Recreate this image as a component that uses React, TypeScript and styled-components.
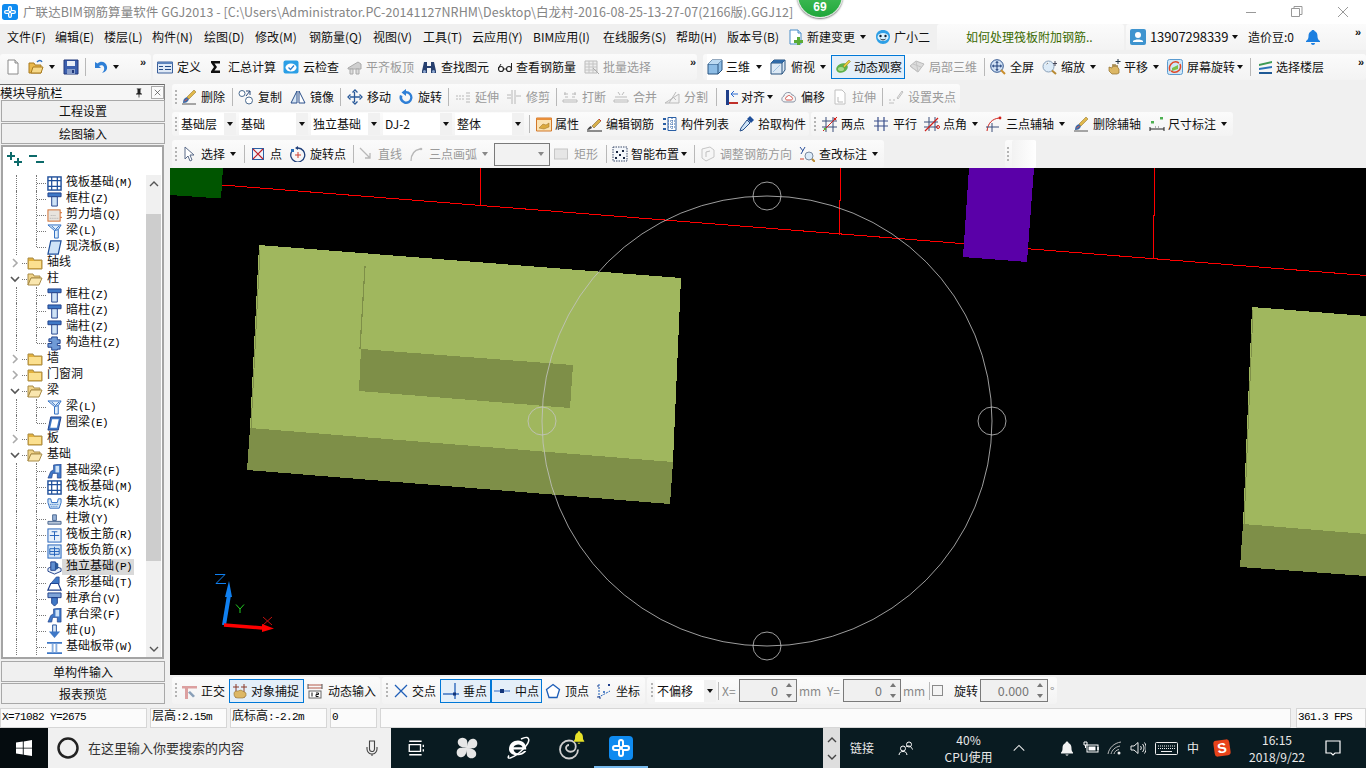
import React from "react";
import styled, { createGlobalStyle } from "styled-components";

const UI = '"Noto Sans CJK SC", "Noto Sans", sans-serif';
const MONO = '"Liberation Mono", "Noto Sans CJK SC", monospace';

const Global = createGlobalStyle`
  html, body { margin: 0; padding: 0; background: #f0f0f0; overflow: hidden; }
  * { box-sizing: border-box; }
`;

const Page = styled.div`
  width: 1366px; height: 768px; display: flex; flex-direction: column; overflow: hidden; position: relative;
  font: 12px/16px ${UI}; color: #111; background: #f0f0f0;
`;
const IconSvg = styled.svg`display: block; flex: none;`;

/* title */
const TitleBar = styled.div`height: 24px; background: #fff; display: flex; align-items: center; position: relative; flex: none;`;
const AppLogo = styled.span`display: flex; margin: 0 5px 0 2px;`;
const TitleText = styled.span`font-size: 12.5px; color: #858585; white-space: nowrap; letter-spacing: 0.07px;`;
const WinControls = styled.div`margin-left: auto; display: flex; height: 20px; align-items: center;`;
const WinButton = styled.span`width: 46px; display: flex; justify-content: center;`;
const Badge = styled.div`
  position: absolute; left: 797px; top: -28px; width: 46px; height: 46px; border-radius: 50%;
  background: linear-gradient(#5fd070, #1fa63a); box-shadow: 0 1px 2px #777; border: 1px solid #e8e8e8;
  color: #fff; font: bold 12px/14px "Liberation Sans", sans-serif; text-align: center; padding-top: 27px;
`;

/* menu */
const MenuBar = styled.div`height: 30px; display: flex; align-items: flex-start; flex: none; padding-left: 7px;`;
const MenuCells = styled.div`display: flex; height: 26px; align-items: center;`;
const MenuItem = styled.span<{ $w: number }>`width: ${(p) => p.$w}px; white-space: nowrap; flex: none;`;
const NewsTab = styled.div`
  width: 187px; height: 26px; flex: none; padding-left: 29px; display: flex; align-items: center; color: #3a6a00;
  border-radius: 3px 3px 0 0; background: linear-gradient(#fbfbfb, #f3f3f3);
`;
const UserTab = styled.div`
  margin-left: 2px; flex: 1; height: 26px; display: flex; align-items: center; padding: 0 3px 0 4px;
  background: linear-gradient(#fbfbfb, #f3f3f3); border-radius: 3px 0 0 0;
`;
const Phone = styled.span`font-size: 13px; margin-left: 4px; width: 77px; white-space: nowrap; letter-spacing: -0.1px;`;
const Beans = styled.span`margin-left: 10px; width: 46px; white-space: nowrap;`;
const BellSlot = styled.span`margin-left: 11px; display: flex;`;
const More = styled.span`margin-left: auto; font: bold 11px/10px "Liberation Sans", sans-serif; align-self: flex-start; margin-top: 3px; padding-right: 2px;`;

/* toolbars */
const ToolRow = styled.div<{ $h: number; $mb?: number; $ml?: number; $mt?: number }>`
  height: ${(p) => p.$h}px; margin: ${(p) => p.$mt ?? 0}px 0 ${(p) => p.$mb ?? 0}px ${(p) => p.$ml ?? 0}px;
  display: flex; flex: none; align-items: stretch;
`;
const Bar = styled.div<{ $ml?: number; $fill?: boolean; $p?: number; $w?: number }>`
  display: flex; align-items: center; height: 100%; flex: ${(p) => (p.$fill ? "1" : "none")};
  margin-left: ${(p) => p.$ml ?? 0}px; padding-left: ${(p) => p.$p ?? 0}px;
  ${(p) => (p.$w ? `width: ${p.$w}px;` : "")}
  background: linear-gradient(#fbfbfb, #f3f3f3); border-radius: 3px; white-space: nowrap;
`;
const GripBox = styled.span<{ $w: number; $x: number }>`
  flex: none; width: ${(p) => p.$w}px; height: 100%; display: flex; align-items: center; padding-left: ${(p) => p.$x}px;
  &::before { content: ""; width: 2px; height: 15px; background: repeating-linear-gradient(to bottom, #b4b4b4 0 2px, transparent 2px 4px); }
`;
const ToolBox = styled.div<{ $w?: number; $p?: number; $on?: boolean; $hl?: boolean }>`
  flex: none; ${(p) => (p.$w ? `width: ${p.$w}px;` : "")} padding-left: ${(p) => p.$p ?? 0}px;
  display: flex; align-items: center;
  ${(p) => (p.$on ? "height: 24px; border: 1px solid #0078d7; background: #e4eff9;" : "")}
  ${(p) => (p.$hl ? "background: #fff; height: 100%;" : "")}
`;
const IconSlot = styled.span`width: 16px; height: 16px; display: flex; flex: none;`;
const Label = styled.span<{ $g: number; $off?: boolean }>`
  margin-left: ${(p) => p.$g}px; white-space: nowrap; color: ${(p) => (p.$off ? "#9a9a9a" : "#111")};
`;
const Caret = styled.i<{ $m: number; $off?: boolean }>`
  margin-left: ${(p) => p.$m}px; flex: none; width: 0; height: 0; border: 3.5px solid transparent; border-bottom: 0;
  border-top: 4px solid ${(p) => (p.$off ? "#888" : "#111")};
`;
const SepBox = styled.span<{ $w: number }>`
  flex: none; width: ${(p) => p.$w}px; height: 100%; display: flex; align-items: center;
  &::before { content: ""; width: 1px; height: 18px; background: #b8b8b8; }
`;
const Chevrons = styled.span`font: bold 11px/10px "Liberation Sans", sans-serif; align-self: flex-start; margin-top: 3px; color: #222;`;
const ComboBox = styled.div<{ $w: number; $mr?: number }>`
  flex: none; width: ${(p) => p.$w}px; height: 22px; margin-right: ${(p) => p.$mr ?? 0}px; display: flex; background: #fff; align-items: center; padding-left: 2px;
`;
const ComboText = styled.span`flex: 1; white-space: nowrap;`;
const ComboBtn = styled.span`width: 12px; height: 22px; background: #f1f1f1; display: flex; align-items: center; justify-content: center;`;
const EmptyCombo = styled.div`
  flex: none; width: 56px; height: 23px; border: 1px solid #7a7a7a; background: #f2f2f2; display: flex; align-items: center; justify-content: flex-end; padding-right: 5px; margin-right: 3px;
`;
const FadePanel = styled.div`flex: 1; height: 100%; margin-left: 3px; background: linear-gradient(90deg, #f2f2f2, #fff); border-radius: 2px;`;
const FieldLabel = styled.span<{ $w: number; $off?: boolean }>`
  flex: none; width: ${(p) => p.$w}px; padding-left: 2px; white-space: nowrap; color: ${(p) => (p.$off ? "#888" : "#111")};
`;
const SpinInput = styled.div<{ $w: number }>`
  flex: none; width: ${(p) => p.$w}px; height: 23px; border: 1px solid #7a7a7a; background: #f0f0f0; display: flex; align-items: center; color: #777;
`;
const SpinValue = styled.span`flex: 1; text-align: right; padding-right: 3px; font-size: 12.5px;`;
const SpinArrows = styled.span`width: 15px; display: flex; flex-direction: column; align-items: center; gap: 7px;`;
const Tri = styled.i<{ $up?: boolean }>`
  width: 0; height: 0; border: 3px solid transparent;
  ${(p) => (p.$up ? "border-top: 0; border-bottom: 4px solid #777;" : "border-bottom: 0; border-top: 4px solid #777;")}
`;
const Check = styled.span`flex: none; width: 11px; height: 11px; border: 1px solid #8a8a8a; margin-right: 9px; background: #f4f4f4;`;

/* body */
const Body = styled.div`height: 622px; display: flex; flex: none;`;
const Nav = styled.div`width: 165px; flex: none; display: flex; flex-direction: column; padding-bottom: 2px;`;
const NavHead = styled.div`
  height: 16px; flex: none; border-top: 1px solid #6a6a6a; background: #f6f6f6; border-right: 1px solid #888; display: flex; align-items: center; font-size: 12.5px; line-height: 14px; white-space: nowrap;
`;
const NavClose = styled.span`width: 17px; height: 13px; border: 1px solid #aaa; background: #fafafa; margin-left: 6px; display: flex; align-items: center; justify-content: center;`;
const NavPin = styled.span`margin-left: 70px; display: flex;`;
const NavButton = styled.div<{ $mt?: number; $h?: number }>`
  height: ${(p) => p.$h ?? 21}px; flex: none; border: 1px solid #a8a8a8; margin: ${(p) => p.$mt ?? 0}px 0 0 1px; text-align: center; line-height: 20px; background: #f0f0f0;
`;
const TreePane = styled.div`flex: 1; min-height: 0; border: 2px solid #a4a4a4; margin: 1px 1px 2px 1px; background: #fff; display: flex; flex-direction: column;`;
const TreeTools = styled.div`height: 28px; flex: none; display: flex; align-items: center; padding: 0 0 4px 4px; gap: 6px;`;
const TreeWrap = styled.div`flex: 1; min-height: 0; display: flex; overflow: hidden;`;
const TreeList = styled.div`flex: 1; overflow: hidden;`;
const Row = styled.div<{ $child?: boolean; $last?: boolean }>`
  height: 16px; position: relative; display: flex; align-items: center; white-space: nowrap; line-height: 16px;
  padding-left: ${(p) => (p.$child ? 44 : 24)}px; font-family: ${MONO};
  ${(p) =>
    p.$child
      ? `&::before { content: ""; position: absolute; left: 33px; top: 0; height: ${p.$last ? 8 : 16}px; border-left: 1px dotted #777; }
         &::after { content: ""; position: absolute; left: 34px; top: 8px; width: 9px; border-top: 1px dotted #777; }`
      : ""}
`;
const Guide = styled.i`position: absolute; left: 13px; top: 0; height: 16px; border-left: 1px dotted #777;`;
const Expander = styled.span`position: absolute; left: 7px; top: 3px; width: 12px; height: 10px; display: flex;`;
const Stub = styled.i`position: absolute; left: 19px; top: 8px; width: 5px; border-top: 1px dotted #777;`;
const RowText = styled.span<{ $sel?: boolean }>`
  margin-left: 4px; padding-right: 2px; background: ${(p) => (p.$sel ? "#d9d9d9" : "transparent")}; font-size: 12px;
  ${(p) => (p.$sel ? "margin-left: 0; padding-left: 4px;" : "")}
`;
const Code = styled.span`font-size: 11px; letter-spacing: -0.6px; font-family: "Liberation Mono", monospace; color: #000;`;
const Scroll = styled.div`width: 15px; flex: none; margin-right: 1px; display: flex; flex-direction: column; background: #f0f0f0; align-items: center;`;
const ScrollEnd = styled.div`height: 16px; flex: none; display: flex; align-items: center; justify-content: center; width: 100%;`;
const ScrollGap = styled.div<{ $h: number }>`height: ${(p) => p.$h}px; flex: none;`;
const ScrollThumb = styled.div`height: 347px; width: 100%; flex: none; background: #cdcdcd;`;

const Work = styled.div`flex: 1; min-width: 0; display: flex; flex-direction: column;`;
const Canvas = styled.div`height: 507px; margin-left: 5px; flex: none; background: #000; overflow: hidden;`;

/* status */
const Status = styled.div`height: 22px; flex: none; display: flex; padding-top: 2px; gap: 3px;`;
const Cell = styled.div<{ $w?: number }>`
  ${(p) => (p.$w ? `width: ${p.$w}px; flex: none;` : "flex: 1;")}
  height: 20px; border: 1px solid #d6d6d6; background: #fbfbfb; padding-left: 1px; line-height: 17px; white-space: nowrap; font-family: ${MONO};
`;
const CellGap = styled.i`width: 0; margin-left: -1px;`;

/* taskbar */
const Taskbar = styled.div`height: 40px; flex: none; display: flex; background: #091b21; color: #e9e9e9; align-items: stretch;`;
const Start = styled.div`width: 48px; flex: none; background: #050c0f; display: flex; align-items: center; justify-content: center;`;
const Search = styled.div`width: 343px; flex: none; background: #f0f0f0; display: flex; align-items: center; color: #333; padding-left: 8px; font-size: 13px;`;
const SearchText = styled.span`margin-left: 8px; width: 276px; white-space: nowrap; font-size: 13px;`;
const TaskBtn = styled.div<{ $w: number; $on?: boolean }>`
  width: ${(p) => p.$w}px; flex: none; display: flex; align-items: center; justify-content: center; position: relative;
  ${(p) => (p.$on ? "border-bottom: 2px solid #76b9ed; padding-top: 2px;" : "")}
`;
const TrayBadge = styled.span`position: absolute; left: 29px; top: 2px; filter: sepia(1) saturate(8) hue-rotate(-5deg) brightness(.9);`;
const Spacer = styled.div`flex: 1;`;
const ScrollStrip = styled.div`width: 17px; flex: none; background: #dedede; display: flex; flex-direction: column; align-items: center; justify-content: space-around; padding: 3px 0;`;
const StackText = styled.div<{ $w: number }>`
  width: ${(p) => p.$w}px; flex: none; display: flex; flex-direction: column; align-items: center; justify-content: center; line-height: 17.5px; font-size: 12px; white-space: nowrap;
`;
const Tray = styled.div<{ $w: number }>`
  width: ${(p) => p.$w}px; flex: none; display: flex; align-items: center; justify-content: center; white-space: nowrap;
`;
const SogouS = styled.span`
  width: 16px; height: 16px; background: #e8431a; border-radius: 3px; color: #fff; font: 900 14px/16px "Liberation Sans", sans-serif; text-align: center; transform: rotate(-8deg); display: block;
`;

/* ---------- icons ---------- */
const icons: Record<string, React.ReactNode> = {
  doc: <><path d="M3 1h7l3 3v11H3z" fill="#fff" stroke="#8a8a8a"/><path d="M10 1v3h3" fill="#ddd" stroke="#8a8a8a"/></>,
  open: <><path d="M1 4h5l1 2h6v8H1z" fill="#e9b94e" stroke="#a97b1e"/><path d="M3 14l2-6h10l-2 6z" fill="#f6d98a" stroke="#a97b1e"/><path d="M9 3c2-2 4-2 5 0" stroke="#2d6fc0" fill="none" strokeWidth="1.4"/></>,
  save: <><path d="M1 1h14v14H1z" fill="#3b5fae" stroke="#22397a"/><path d="M4 2h8v5H4z" fill="#e9eef7"/><path d="M4 10h8v5H4z" fill="#8aa0cc"/><path d="M9 11h2v3H9z" fill="#22397a"/></>,
  undo: <path d="M3 3v6h6L7 7c3-2 6 0 5 4-.3 1.200-1 2-2 3 4-1 5.500-3.500 5-6.500C14 3 9 1 5.500 4.500z" fill="#2f7fd6"/>,
  table: <><path d="M.5 3h15v11H.5z" fill="#dfe9f6" stroke="#3a5f9a"/><path d="M.5 3h15v2H.5z" fill="#5c83bb"/><path d="M2 7h4v1H2zm0 3h4v1H2zM8 7h6v1H8zm0 3h6v1H8z" fill="#234a85"/></>,
  sigma: <path d="M4 2h9v2.500H7.500L10 8l-2.500 3.500H13V14H4v-1.800L7 8 4 3.800z" fill="#111"/>,
  cloud: <><rect x=".5" y="1.500" width="15" height="13" rx="2" fill="#2b9fe6"/><ellipse cx="8" cy="8.500" rx="5.500" ry="4" fill="#fff"/><path d="M5.500 8.500l2 2 3.500-4" stroke="#2b7fd0" strokeWidth="1.300" fill="none"/></>,
  flush: <><path d="M1 9l10-6 3 2v5H1z" fill="#cfcfcf" stroke="#aaa"/><path d="M3 15v-5h3v5zM9 15v-5h3v5z" fill="#ddd" stroke="#aaa"/></>,
  binoc: <><path d="M3 3h3v4h4V3h3l2 9v2h-5V9H6v5H1v-2z" fill="#27406f"/><circle cx="3.500" cy="12.500" r="1.500" fill="#8fa8d0"/><circle cx="12.500" cy="12.500" r="1.500" fill="#8fa8d0"/></>,
  glasses: <><circle cx="4" cy="10" r="2.500" fill="#fff" stroke="#222" strokeWidth="1.200"/><circle cx="12" cy="10" r="2.500" fill="#fff" stroke="#222" strokeWidth="1.200"/><path d="M6.500 10h3M1.500 9L4 5M14.500 9V4" stroke="#222" fill="none"/></>,
  batch: <><path d="M1 2h12v12H1z" fill="#eee" stroke="#bbb"/><path d="M1 5h12M1 8h12M1 11h12M5 2v12M9 2v12" stroke="#c4c4c4"/><path d="M9 9l6 6" stroke="#aaa"/></>,
  cube: <><path d="M1 5l4-4h10v10l-4 4H1z" fill="#8dbde6" stroke="#28527f"/><path d="M1 5h10v10M11 5l4-4" fill="none" stroke="#28527f"/><path d="M1 5l4-4h10l-4 4z" fill="#bcdaf2"/></>,
  cubeTop: <><path d="M1 4l3-3h11v10l-3 4H1z" fill="#dce9f5" stroke="#28527f"/><path d="M1 4h11v11M12 4l3-3" fill="none" stroke="#28527f"/><path d="M1 4l3-3h11l-3 3z" fill="#2f6aa8"/><path d="M3 13l7-7" stroke="#9cc0e0"/></>,
  orbit: <><ellipse cx="7" cy="9" rx="6" ry="4.500" fill="#5fb04a" transform="rotate(-25 7 9)"/><ellipse cx="6" cy="10" rx="3" ry="2" fill="#a6d98c"/><path d="M8 7l6-6 1.500 1.500-6 6z" fill="#e2c93a" stroke="#8a7a20" strokeWidth=".5"/></>,
  local3d: <><path d="M1 7l6-5 8 3-6 8z" fill="#dcdcdc" stroke="#bbb"/><path d="M4 5l8 3M7 2l2 11M1 7l8 6" stroke="#c4c4c4"/></>,
  zoomAll: <><circle cx="7" cy="7" r="6.300" fill="#cfe0f4" stroke="#31568f"/><path d="M7 2.500v9M2.500 7h9M5.800 4L7 2.500 8.200 4M5.800 10L7 11.500 8.200 10M4 5.800L2.500 7 4 8.200M10 5.800L11.500 7 10 8.200" stroke="#1f3f7a" fill="none"/><path d="M11 11l4 4" stroke="#c98d2a" strokeWidth="2"/></>,
  zoom: <><circle cx="6.500" cy="7.500" r="5.500" fill="#dcebf8" stroke="#8aa0b8"/><path d="M3.500 6c1-2 2-2.500 3.500-2.500" stroke="#fff"/><path d="M10 11.500l4 3.500" stroke="#b88a33" strokeWidth="2"/><path d="M13 2v5M11 4.500h4" stroke="#445"/></>,
  pan: <><path d="M3 8l3 1 1-4 1 3 1-3 1 3 1-2 1 3 1 1v4l-2 1H6l-3-3z" fill="#dcb765" stroke="#8f6f2c" strokeWidth=".7"/><path d="M12 0v5M9.500 2.500h5" stroke="#234" strokeWidth="1"/></>,
  screen: <><rect x=".5" y=".5" width="15" height="15" rx="2" fill="#cfe6f7" stroke="#5a9bd0"/><path d="M3 12c-2-5 2-10 7-9l2 1" stroke="#e04a2a" strokeWidth="1.500" fill="none"/><path d="M13 5c2 5-2 9-7 8l-2-1" stroke="#e04a2a" strokeWidth="1.500" fill="none"/><path d="M5 9l6-3v4l-6 2z" fill="#7cc04a"/></>,
  layers: <><path d="M1 5l13-3v2L1 7z" fill="#3d9a55"/><path d="M1 9l13-2v2L1 11z" fill="#2b72b8"/><path d="M1 13h13v2H1z" fill="#1f5a96"/></>,
  newchg: <><path d="M2 1h8l3 3v11H2z" fill="#fff" stroke="#4a8ec9"/><path d="M10 1v3h3" fill="#cfe3f4" stroke="#4a8ec9"/><path d="M9 8h3v3h3v3h-3v2H9v-2H6v-3h3z" fill="#5aac36"/></>,
  guang: <><path d="M8 1c4 0 7 2.500 7 6.500 0 4.500-3 7.500-7 7.500s-7-3-7-7.500C1 3.500 4 1 8 1z" fill="#2d9fe6"/><ellipse cx="8" cy="8" rx="5.500" ry="4" fill="#d9f1fd"/><circle cx="5.500" cy="7" r="1.200" fill="#123"/><circle cx="10.500" cy="7" r="1.200" fill="#123"/><path d="M5.500 10c1.500 1.200 3.500 1.200 5 0" stroke="#123" fill="none"/></>,
  avatar: <><rect width="16" height="16" rx="2" fill="#3f94cf"/><circle cx="8" cy="6" r="3" fill="#fff"/><path d="M3 13v-1c2-2 8-2 10 0v1z" fill="#fff"/></>,
  bell: <path d="M6.500 2C6.500 .8 9.500 .8 9.500 2c2.500 1 3 3 3 5.500 0 2 1 3.500 2.500 4.500v1H1v-1c1.500-1 2.500-2.500 2.500-4.500 0-2.500.5-4.500 3-5.500zM6 14h4c0 2.500-4 2.500-4 0z" fill="#1c7fe0"/>,
  eraser: <><path d="M2 14c0-3 1-5 4-6l2 2c-1 3-3 4-6 4z" fill="#3a6aa8"/><path d="M6 8l7-7 2 2-7 7z" fill="#e0b84a" stroke="#8a6a20" strokeWidth=".5"/><path d="M1 15h14" stroke="#555"/><path d="M3.500 12l3-2" stroke="#e05a4a"/></>,
  copy: <><circle cx="4" cy="4.500" r="3" fill="#fff" stroke="#4a6a8f"/><circle cx="11" cy="11.500" r="3.500" fill="#fff" stroke="#4a6a8f"/><path d="M8 2h4v4M12 2L8 7" stroke="#2a4a7a" fill="none"/></>,
  mirror: <><path d="M7 2v12H1z" fill="#d7e6f5" stroke="#2a4f8a"/><path d="M9 2v12h6z" fill="#fff" stroke="#2a4f8a"/></>,
  move: <path d="M7.500 3v10M3 8h10M5.500 3.500L8 1l2.500 2.500M5.500 12.500L8 15l2.500-2.500M3.500 5.500L1 8l2.500 2.500M12.500 5.500L15 8l-2.500 2.500" stroke="#2a5a9a" strokeWidth="1.300" fill="none"/>,
  rotate: <path d="M8 2a6.500 6.500 0 1 1-6 4l2.500 1A4 4 0 1 0 8 4.500V7L3.500 3.500 8 0z" fill="#2f7fd6"/>,
  extend: <path d="M1 7h9M1 10h9M12 3v11M14 3v11" stroke="#b8b8b8" strokeDasharray="2 1" fill="none"/>,
  trim: <path d="M6 1v14M9 1v14M1 6h4M1 9h4M10 7h5" stroke="#b8b8b8" fill="none"/>,
  brk: <path d="M1 13h14v-2H1zM2 5h4M10 5h4M3 3v3M13 3v3M6 8H3M10 8h3" stroke="#bbb" fill="none"/>,
  merge: <path d="M1 13h14v-2H1zM5 3l2 3M11 3L9 6M2 8h12" stroke="#bbb" fill="none"/>,
  split: <path d="M1 14h14V5zM5 14L12 3M9 8l3 3" stroke="#bbb" fill="#f2f2f2"/>,
  alignL: <><path d="M3 1h3v15H3z" fill="#1f3f8a"/><path d="M6 13h9v2H6z" fill="#c0302a"/><path d="M15 5H8l3-3M8 5l3 3" stroke="#2a6ad0" fill="none"/></>,
  offset: <><path d="M4 13c-4 0-4-5-1-6 0-4 7-5 8-1 4 0 5 7 1 7z" fill="#f4f4f4" stroke="#8a93a4"/><path d="M6 11c-2 0-2-3 0-3 .5-2 3.500-2 4 0 2 0 2 3 0 3z" fill="#fff" stroke="#d4524a"/></>,
  stretch: <><path d="M3 1h7l3 3v11H3z" fill="#fff" stroke="#c0c0c0"/><path d="M6 8v5h5" stroke="#bbb" fill="none"/></>,
  clip: <><path d="M1 14h5M9 9l5-7 1 1-5 7z" stroke="#c0c0c0" fill="#eee"/><path d="M1 11h2M5 11h2" stroke="#bbb"/></>,
  props: <><path d="M.5 2h15v13H.5z" fill="#fbe3b4" stroke="#d2782a"/><path d="M.5 2h15v2H.5z" fill="#e88e3a"/><path d="M3 12l4-4 3 1 3-2v4l-5 2z" fill="#dbaa40" stroke="#9a6f20" strokeWidth=".5"/></>,
  editbar: <><path d="M6 10l7-7 2 2-7 7z" fill="#d8b04a" stroke="#6a5020" strokeWidth=".5"/><path d="M1 14c2 0 3-1 5-2l-1-2c-2 1-3 2-4 4z" fill="#444"/><path d="M1 15h15" stroke="#222"/><path d="M13 3l2 2" stroke="#d0302a"/></>,
  list: <><path d="M1 2h3v2H1zM1 7h3v2H1zM1 12h3v2H1z" fill="#2a5fa5"/><path d="M6 1.500h8v13H6z" fill="#fff" stroke="#2a5fa5"/><path d="M6 5h8M6 8h8M6 11h8M10 2v12" stroke="#2a5fa5" strokeDasharray="1 1"/></>,
  pick: <><path d="M9 4l3 3-7 7-3 1 1-3z" fill="#cfe4f7" stroke="#27508a"/><path d="M9 3l3-3 4 4-3 3z" fill="#1f4f9a"/></>,
  twoPt: <><path d="M4 1v15M11 1v15M0 5h15M0 11h15" stroke="#3a4f7a" fill="none"/><path d="M1 15L15 1" stroke="#d0201a"/><circle cx="3" cy="13" r="1.300" fill="#5aac36"/><circle cx="13" cy="3" r="1.300" fill="#d0201a"/></>,
  parallel: <path d="M5 1v14M11 1v14M1 5h14M1 10h14" stroke="#3a4f8a" strokeWidth="1.200" fill="none"/>,
  angle: <><path d="M5 1v14M11 1v14M0 6h14M0 11h14" stroke="#3a4f7a" fill="none"/><path d="M1 15L14 2" stroke="#d0201a" strokeWidth="1.200"/><circle cx="14" cy="11" r="1.500" fill="none" stroke="#d0201a"/></>,
  arc3: <><path d="M1 15C2 7 6 3 13 2" stroke="#d0201a" fill="none"/><path d="M6 7v9M0 11h13" stroke="#3a4f7a" fill="none"/><circle cx="14" cy="2" r="1.400" fill="#d0201a"/></>,
  dim: <><path d="M1 15V11M15 15V11M1 13h14" stroke="#222" fill="none"/><path d="M2 5h3v2.500H2zM11 1h3v2.500h-3z" fill="#4caf50"/><path d="M6 11h1M9 11h1" stroke="#666"/></>,
  cursor: <path d="M4 1v12l3-3 2 5 2-1-2-5h4z" fill="#fff" stroke="#5a6a88"/>,
  ptBox: <><rect x="2.500" y="2.500" width="11" height="11" fill="#eef3fa" stroke="#2a5fa5"/><path d="M3 3l10 10M13 3L3 13" stroke="#c0202a" strokeWidth="1.200"/></>,
  rotPt: <><path d="M2 5a7 7 0 1 0 6-3" stroke="#1f3f7a" strokeWidth="1.300" fill="none"/><path d="M8 0L5 2l3 2z" fill="#1f3f7a"/><path d="M8 6v6M5 9h6" stroke="#d04030" fill="none"/><path d="M1 3h3v3H1z" fill="#2a6fb8"/></>,
  lineD: <path d="M2 2l10 10M12 7v5H7" stroke="#b8b8b8" strokeWidth="1.300" fill="none"/>,
  arcD: <><path d="M3 15C3 8 7 4 12 3" stroke="#b8b8b8" strokeWidth="1.300" fill="none"/><circle cx="13" cy="3" r="1.300" fill="#bbb"/></>,
  rectD: <rect x="1.500" y="3" width="13" height="10" fill="#e6e6e6" stroke="#c6c6c6"/>,
  smart: <><rect x="1" y="1" width="14" height="14" fill="#f4f7fb" stroke="#3a4a6a" strokeDasharray="1.500 1"/><path d="M4 5h2v2H4zM10 4h2v2h-2zM7 8h2v2H7zM3 11h2v2H3zM11 11h2v2h-2z" fill="#1d2a45"/></>,
  adjust: <><path d="M2 3l8-2 4 3v7l-8 4-4-3z" fill="#f6f6f6" stroke="#c6c6c6"/><path d="M6 6v5M6 6l4-1" stroke="#c0c0c0" fill="none"/></>,
  editMark: <><path d="M1 1l3 4M6 1L2 8" stroke="#2a4f9a" fill="none"/><circle cx="10" cy="10" r="4" fill="#dcebf8" stroke="#7a8aa0"/><path d="M13 13l3 3" stroke="#b88a33" strokeWidth="2"/><path d="M1 13h4" stroke="#d0402a"/></>,
  ortho: <><path d="M1 3h15v2.500H1zM4 3h3v13H4z" fill="#dca0a0"/><path d="M9 8l5 5-2 1.500-5-5z" fill="#8aa0b8"/></>,
  snap: <><path d="M4 1v14M12 1v14M1 4h6M9 4h6" stroke="#8a3a2a" fill="none"/><path d="M2 11c0-3 2-3 4-3l3-1 5 3v3l-3 2H6c-2 0-4-1-4-4z" fill="#dcb765" stroke="#8f6f2c" strokeWidth=".6"/></>,
  dyn: <><path d="M1 2h14M1 5h14" stroke="#b45a4a"/><path d="M1 1v5M15 1v5" stroke="#555"/><rect x="2" y="8" width="12" height="7" fill="#fff" stroke="#666"/><path d="M5 9.500v4M9 10h2.500v1.500H9v2h2.500" stroke="#111" fill="none"/></>,
  cross: <path d="M2 2l12 12M14 2L2 14" stroke="#1f5fb8" strokeWidth="1.300"/>,
  foot: <><path d="M0 11h16" stroke="#1f5fb8" strokeWidth="1.300"/><path d="M12 0v16" stroke="#1f5fb8" strokeWidth="1.300"/><rect x="10" y="9.500" width="3" height="3" fill="#12357a"/></>,
  mid: <><path d="M0 8h16" stroke="#5a8ad0" strokeWidth="1.300"/><rect x="6" y="6" width="4" height="4" fill="#12357a"/></>,
  vertex: <path d="M8 1.500l6.500 5-2.500 8H4l-2.500-8z" fill="#fff" stroke="#1f5fb8" strokeWidth="1.300"/>,
  coord: <><path d="M3 1v13l11-6" stroke="#1f5fb8" fill="none" strokeDasharray="2 1"/><path d="M1 3h2M12 1l2 2M14 1l-2 2M1 14h3v2" stroke="#1f3f8a" fill="none"/><circle cx="8" cy="9" r="1" fill="#1f5fb8"/></>,
  plus2: <path d="M3 1h2v3h3v2H5v3H3V6H0V4h3zM10 7h2v3h3v2h-3v3h-2v-3H7v-2h3z" fill="#0d6a6a"/>,
  minus2: <path d="M0 4h8v2H0zM7 10h8v2H7z" fill="#0d6a6a"/>,
  pin: <path d="M5 2h6v1h-1v5l2 1v1H8.500v4h-1v-4H4V9l2-1V3H5z" fill="#222"/>,
  x: <path d="M4 4l8 8M12 4l-8 8" stroke="#444"/>,
  foldC: <><path d="M1 3h5l1 2h8v9H1z" fill="#e3b13c" stroke="#a88b46"/><path d="M2 6h12v7H2z" fill="#fbe08f"/></>,
  foldO: <><path d="M1 3h5l1 2h6v2H4l-3 7z" fill="#f1d489" stroke="#a88b46"/><path d="M1 14l3-7h11l-3 7z" fill="#f9e6ae" stroke="#a88b46"/></>,
  tCol: <><path d="M1 1h14v4H1z" fill="#3f78c6" stroke="#1f3f8a"/><path d="M5 5h6v10H5z" fill="#cfe3f7" stroke="#1f3f8a"/></>,
  raft: <><rect x="1" y="1" width="14" height="14" fill="#fff" stroke="#1f4f9a" strokeWidth="1.500"/><path d="M5 1v14M11 1v14M1 5h14M1 11h14" stroke="#1f4f9a" strokeWidth="1.300"/></>,
  wall: <><rect x="1" y="2" width="13" height="12" fill="#e8e4de" stroke="#d06a2a"/><path d="M3 11h9M4 8h6" stroke="#aaa" strokeDasharray="1 1"/><path d="M14 5h2M14 10h2" stroke="#d06a2a"/></>,
  beam: <><path d="M1 1h14l-3 5v9H8V7z" fill="#e0eefa" stroke="#2a6ac0"/><path d="M5 2l4 4 4-4M8 7l4-1" stroke="#2a6ac0" fill="none"/></>,
  slab: <path d="M4 1h11l-3 14H1z" fill="#cfe3f7" stroke="#1f4f9a" strokeWidth="1.300"/>,
  gz: <path d="M5 1h6v3h3v4h-3v2h3v4h-3v1H5v-3H1V8h4V6H2V3h3z" fill="#6f9ad6" stroke="#1f3f8a"/>,
  ring: <><path d="M4 1h11l-3 14H1z" fill="#3f78c6" stroke="#1f3f8a"/><path d="M5.500 3.500h7l-2 9h-7z" fill="#fff"/></>,
  fbeam: <><path d="M1 15l3-7 3-2V1l8-1v15h-4v-5H6l-1 5z" fill="#3f78c6" stroke="#1f3f8a" strokeWidth=".7"/><path d="M9 2h4v7H9z" fill="#cfe3f7"/></>,
  pit: <><path d="M1 3h3l1 4h6l1-4h3v4l-2 6H3L1 7z" fill="#d7e9f8" stroke="#2a6ac0"/><path d="M3 9h10M4 11h8" stroke="#2a6ac0" strokeDasharray="1 1"/></>,
  pier: <><path d="M6 3h4v6H6z" fill="#9ab4d8" stroke="#48648f"/><path d="M1 10h14v3H1z" fill="#b7c5d8" stroke="#48648f"/></>,
  ribM: <><rect x="1" y="1" width="14" height="14" fill="#e7f0fa" stroke="#1f5fb8"/><path d="M3 8h10M8 4v9M5 4h6" stroke="#1f5fb8"/></>,
  ribN: <><rect x="1" y="1" width="14" height="14" fill="#cfe3f7" stroke="#1f5fb8"/><path d="M3 5h10v6H3zM8 3v10M3 8h10" stroke="#1f5fb8" fill="none"/></>,
  iso: <><path d="M1 9l6-3 8 3v3l-7 3-7-3z" fill="#eaf2fb" stroke="#1f3f8a"/><path d="M4 2h5v9H4z" fill="#5f8fd0" stroke="#1f3f8a"/><path d="M9 2l3 2v5l-3 2z" fill="#2a5a9a"/></>,
  strip: <><path d="M1 15l3-7h8l3 7z" fill="#fff" stroke="#1f3f8a" strokeWidth="1.300"/><path d="M4 8l6-7h3v7z" fill="#3f78c6" stroke="#1f3f8a" strokeWidth=".7"/></>,
  cap: <><path d="M1 1h14v5H1z" fill="#7fa4d8" stroke="#1f3f8a"/><path d="M5 6h6v6l-3 3-3-3z" fill="#3f78c6" stroke="#1f3f8a"/></>,
  pile: <><path d="M6 1h4v8H6z" fill="#dbe8f6" stroke="#1f4f9a"/><path d="M2 8h12l-6 7z" fill="#3f78c6"/></>,
  band: <><path d="M0 2h16v2H0zM0 13h16v2H0z" fill="#3f78c6"/><path d="M5 4h2v9H5zM9 4h2v9H9z" fill="#8ab0e0"/></>,
  winlogo: <path d="M0 2.500L6.800 1.500v6.200H0zM7.700 1.400L16 0v7.700H7.700zM0 8.500h6.800v6.100L0 13.500zM7.700 8.500H16V16l-8.300-1.300z" fill="#fff"/>,
  mic: <path d="M5.500 1h5v8a2.500 2.500 0 0 1-5 0zM3 7v2a5 5 0 0 0 10 0V7M8 14v2" stroke="#444" fill="none" strokeWidth="1.100"/>,
  tview: <path d="M2 2h11M2 14h11M2 5v6h10V5zM14.500 5v2M14.500 9v2" stroke="#fff" strokeWidth="1.200" fill="none"/>,
  fan: <path d="M8 8C4 8 1 6 2 3c1-2.500 5-2.500 6 0 .5 1.500 0 3 0 5zm0 0c0-4 2-7 5-6 2.500 1 2.500 5 0 6-1.500.5-3 0-5 0zm0 0c4 0 7 2 6 5-1 2.500-5 2.500-6 0-.5-1.500 0-3 0-5zm0 0c0 4-2 7-5 6-2.500-1-2.500-5 0-6 1.500-.5 3 0 5 0z" fill="#e6e6e6"/>,
  ie: <><path d="M2 9c0-4 3-6 6-6 3.500 0 5.500 2.500 5.500 6H5c.5 3 5 3.500 7 1h1.500c-2 4-11 4-11.500-1zM5 7.500h6c-.5-2.500-5-2.500-6 0z" fill="#fff"/><path d="M2 13C0 16 4 15 9 11s8-9 5-10c-1-.3-3 .5-4 1" stroke="#fff" fill="none"/></>,
  swirl: <><path d="M14 9A6 6 0 1 1 8 3c3 0 4.500 2 4.500 4S11 10.500 9 10.500 6 9 6 8s1-2 2-2" stroke="#cfcfcf" strokeWidth="1.200" fill="none"/></>,
  gld: <><rect width="24" height="24" rx="4" fill="#0f8bf0"/><path d="M12 4a2 2 0 0 1 2 2v4h4a2 2 0 0 1 0 4h-4v4a2 2 0 0 1-4 0v-4H6a2 2 0 0 1 0-4h4V6a2 2 0 0 1 2-2z" fill="none" stroke="#fff" strokeWidth="2"/><circle cx="12" cy="12" r="2" fill="#fff"/></>,
  person: <><circle cx="11" cy="4.500" r="2.500" stroke="#fff" fill="none"/><circle cx="5" cy="8.500" r="2.500" stroke="#fff" fill="none"/><path d="M1 15c.5-3 2-3.500 4-3.500s3.500.5 4 3.500M8 6.500c2-1 5-1 6.500 3" stroke="#fff" fill="none"/></>,
  chevUp: <path d="M2 11l6-6 6 6" stroke="#eee" strokeWidth="1.200" fill="none"/>,
  trayBell: <path d="M6.500 3c0-2 3-2 3 0 2.500 1 3 3 3 5.500 0 2 .5 3 1.500 4v1H2v-1c1-1 1.500-2 1.500-4 0-2.500.5-4.500 3-5.500zM6.500 14.500h3c0 1.500-3 1.500-3 0z" fill="#f2f2f2"/>,
  battery: <><path d="M1 2v3h3V2zM2.500 5v3" stroke="#fff" fill="none"/><rect x="4" y="5" width="11" height="7" fill="none" stroke="#fff"/><path d="M5.500 6.500h7v4h-7z" fill="#fff"/><path d="M15 7v3" stroke="#fff" strokeWidth="1.500"/></>,
  wifi: <><path d="M1 14C2 8 7 3 14 2M4 14c1-4 4-7 9-8M7 14c.5-2 2-4 5-4.500" stroke="#bbb" fill="none"/><circle cx="12" cy="13" r="1.500" fill="#eee"/></>,
  sound: <path d="M1 6h3l4-3.500v11L4 10H1zM10.500 6c1 1.200 1 2.800 0 4M12.500 4c2 2.500 2 5.500 0 8M14.500 2.500c2.200 3.500 2.200 7.500 0 11" stroke="#eee" fill="none"/>,
  notif: <path d="M1 1h14v12h-5l-2 2-2-2H1z" fill="none" stroke="#fff" strokeWidth="1.200"/>,
  upS: <path d="M2 9l4-4 4 4" stroke="#555" strokeWidth="1.400" fill="none"/>,
  chevR: <path d="M3 1l4 4-4 4" stroke="#aaa" strokeWidth="1.600" fill="none"/>,
  chevD: <path d="M1 3l4 4 4-4" stroke="#555" strokeWidth="1.600" fill="none"/>,
};

const Ic = ({ n, s = 16 }: { n: string; s?: number }) => {
  const box = n === "gld" ? "0 0 24 24" : n === "upS" ? "0 0 12 12" : n === "chevR" || n === "chevD" ? "0 0 10 10" : "0 0 16 16";
  return (
    <IconSvg width={s} height={s} viewBox={box}>
      {icons[n]}
    </IconSvg>
  );
};

/* ---------- toolbar data ---------- */
type Item = { i?: string; t?: string; w?: number; g?: number; p?: number; a?: number; off?: boolean; on?: boolean; hl?: boolean; sep?: number; grip?: [number, number] };

const Tools = ({ items }: { items: Item[] }) => (
  <>
    {items.map((it, k) => {
      if (it.sep) return <SepBox key={k} $w={it.sep} />;
      if (it.grip) return <GripBox key={k} $w={it.grip[0]} $x={it.grip[1]} />;
      return (
        <ToolBox key={k} $w={it.w} $p={it.p} $on={it.on} $hl={it.hl}>
          {it.i && (
            <IconSlot>
              <Ic n={it.i} />
            </IconSlot>
          )}
          {it.t && (
            <Label $g={it.g ?? 4} $off={it.off}>
              {it.t}
            </Label>
          )}
          {it.a !== undefined && <Caret $m={it.a} $off={it.off} />}
        </ToolBox>
      );
    })}
  </>
);

const quick: Item[] = [
  { i: "doc", w: 23 }, { i: "open", w: 35, a: 5 }, { i: "save", w: 22 }, { sep: 7 }, { i: "undo", w: 48, a: 5 },
];
const main: Item[] = [
  { i: "table", t: "定义", w: 50 }, { i: "sigma", t: "汇总计算", w: 76, g: 5 }, { i: "cloud", t: "云检查", w: 64 },
  { i: "flush", t: "平齐板顶", w: 74, g: 3, off: true }, { i: "binoc", t: "查找图元", w: 76, g: 4 }, { i: "glasses", t: "查看钢筋量", w: 87, g: 3 },
  { i: "batch", t: "批量选择", w: 106, g: 3, off: true },
];
const view: Item[] = [
  { i: "cube", t: "三维", w: 63, g: 3, a: 6, hl: true }, { i: "cubeTop", t: "俯视", w: 61, g: 5, a: 5 },
  { i: "orbit", t: "动态观察", w: 74, g: 3, on: true, p: 3 }, { i: "local3d", t: "局部三维", w: 79, p: 4, off: true }, { sep: 6 },
  { i: "zoomAll", t: "全屏", w: 52 }, { i: "zoom", t: "缩放", w: 64, g: 3, a: 5 }, { i: "pan", t: "平移", w: 61, g: 2, a: 5 },
  { i: "screen", t: "屏幕旋转", w: 83, a: 2 }, { sep: 8 }, { i: "layers", t: "选择楼层", w: 70, g: 2 },
];
const edit: Item[] = [
  { grip: [9, 3] }, { i: "eraser", t: "删除", w: 51 }, { sep: 6 }, { i: "copy", t: "复制", w: 52 }, { i: "mirror", t: "镜像", w: 50 }, { sep: 7 },
  { i: "move", t: "移动", w: 51 }, { i: "rotate", t: "旋转", w: 50 }, { sep: 7 }, { i: "extend", t: "延伸", w: 51, off: true }, { i: "trim", t: "修剪", w: 50, off: true }, { sep: 6 },
  { i: "brk", t: "打断", w: 51, off: true }, { i: "merge", t: "合并", w: 51, off: true }, { i: "split", t: "分割", w: 52, off: true }, { sep: 7 },
  { i: "alignL", t: "对齐", w: 58, g: 2, a: 2 }, { i: "offset", t: "偏移", w: 51 }, { i: "stretch", t: "拉伸", w: 50, off: true }, { sep: 6 },
  { i: "clip", t: "设置夹点", w: 72, off: true },
];
const comp: Item[] = [
  { sep: 7 }, { i: "props", t: "属性", w: 50, g: 3 }, { i: "editbar", t: "编辑钢筋", w: 76 }, { i: "list", t: "构件列表", w: 76, g: 3 }, { i: "pick", t: "拾取构件", w: 71 },
];
const axis: Item[] = [
  { grip: [11, 3] }, { i: "twoPt", t: "两点", w: 51, g: 3 }, { i: "parallel", t: "平行", w: 51 }, { i: "angle", t: "点角", w: 62, g: 3, a: 5 },
  { i: "arc3", t: "三点辅轴", w: 87, a: 5 }, { i: "eraser", t: "删除辅轴", w: 76 }, { i: "dim", t: "尺寸标注", w: 84, g: 3, a: 5 },
];
const drawA: Item[] = [
  { grip: [9, 3] }, { i: "cursor", t: "选择", w: 63, a: 5 }, { sep: 6 }, { i: "ptBox", t: "点", w: 40 }, { i: "rotPt", t: "旋转点", w: 63 }, { sep: 5 },
  { i: "lineD", t: "直线", w: 50, off: true }, { i: "arcD", t: "三点画弧", w: 86, g: 5, a: 5, off: true },
];
const drawB: Item[] = [
  { i: "rectD", t: "矩形", w: 53, g: 5, off: true }, { sep: 6 }, { i: "smart", t: "智能布置", w: 82, g: 3, a: 2 }, { sep: 6 },
  { i: "adjust", t: "调整钢筋方向", w: 99, off: true }, { i: "editMark", t: "查改标注", w: 85, a: 5 },
];
const snapA: Item[] = [
  { grip: [9, 3] }, { i: "ortho", t: "正交", w: 48 }, { i: "snap", t: "对象捕捉", w: 75, g: 3, on: true, p: 2 }, { i: "dyn", t: "动态输入", w: 76, g: 5, p: 3 },
];
const snapB: Item[] = [
  { grip: [11, 4] }, { i: "cross", t: "交点", w: 47, g: 3 }, { i: "foot", t: "垂点", w: 51, on: true, p: 2 }, { i: "mid", t: "中点", w: 51, g: 5, on: true, p: 2 },
  { i: "vertex", t: "顶点", w: 54, p: 3 }, { i: "coord", t: "坐标", w: 49 },
];

const Combo = ({ t, w, mr = 3 }: { t: string; w: number; mr?: number }) => (
  <ComboBox $w={w} $mr={mr}>
    <ComboText>{t}</ComboText>
    <ComboBtn>
      <Caret $m={0} />
    </ComboBtn>
  </ComboBox>
);

const Spin = ({ v, w }: { v: string; w: number }) => (
  <SpinInput $w={w}>
    <SpinValue>{v}</SpinValue>
    <SpinArrows>
      <Tri $up />
      <Tri />
    </SpinArrows>
  </SpinInput>
);

/* ---------- tree ---------- */
type Node = { i: string; t: string; c?: string; child?: boolean; last?: boolean; open?: boolean; sel?: boolean };
const n = (i: string, t: string, c?: string, last?: boolean, sel?: boolean): Node => ({ i, t, c, child: true, last, sel });
const f = (t: string, open?: boolean): Node => ({ i: open ? "foldO" : "foldC", t, open });
const tree: Node[] = [
  n("raft", "筏板基础", "(M)"), n("tCol", "框柱", "(Z)"), n("wall", "剪力墙", "(Q)"), n("beam", "梁", "(L)"), n("slab", "现浇板", "(B)", true),
  f("轴线"), f("柱", true), n("tCol", "框柱", "(Z)"), n("tCol", "暗柱", "(Z)"), n("tCol", "端柱", "(Z)"), n("gz", "构造柱", "(Z)", true),
  f("墙"), f("门窗洞"), f("梁", true), n("beam", "梁", "(L)"), n("ring", "圈梁", "(E)", true),
  f("板"), f("基础", true), n("fbeam", "基础梁", "(F)"), n("raft", "筏板基础", "(M)"), n("pit", "集水坑", "(K)"), n("pier", "柱墩", "(Y)"),
  n("ribM", "筏板主筋", "(R)"), n("ribN", "筏板负筋", "(X)"), n("iso", "独立基础", "(P)", false, true), n("strip", "条形基础", "(T)"),
  n("cap", "桩承台", "(V)"), n("fbeam", "承台梁", "(F)"), n("pile", "桩", "(U)"), n("band", "基础板带", "(W)"),
];

const Tree = () => (
  <TreeList>
    {tree.map((r, k) => (
      <Row key={k} $child={r.child} $last={r.last}>
        {r.child ? <Guide /> : (
          <>
            <Expander><Ic n={r.open ? "chevD" : "chevR"} s={10} /></Expander>
            <Stub />
          </>
        )}
        <Ic n={r.i} s={r.child ? 15 : 16} />
        <RowText $sel={r.sel}>
          {r.t}
          {r.c && <Code>{r.c}</Code>}
        </RowText>
      </Row>
    ))}
  </TreeList>
);

/* ---------- canvas drawing ---------- */
const Scene = () => (
  <IconSvg width={1196} height={507} viewBox="170 168 1196 507">
    <path d="M170 168H223L221 198.500 170 195z" fill="#005500" shapeRendering="crispEdges" />
    <g stroke="#ff0000" fill="none" shapeRendering="crispEdges">
      <path d="M222 185L1366 275.500" />
      <path d="M480.500 168V205M840.500 168V200H839.500V235M1154.500 168V215H1153.500V258" />
    </g>
    <path d="M969 168H1034L1027 262 963 257z" fill="#5a00a8" shapeRendering="crispEdges" />
    <g shapeRendering="crispEdges">
      <path d="M259 245L681 278 673 462 250 428z" fill="#a0b75e" />
      <path d="M250 428L673 462 670 504 247 470z" fill="#7e8f48" />
      <path d="M361 349L573 365 570 408 359 391z" fill="#7e8f48" />
      <path d="M365 266L360 349" stroke="#7e8f48" strokeWidth="1.200" fill="none" />
      <path d="M260 250L251 428" stroke="#7e8f48" strokeWidth="1" fill="none" />
      <path d="M1252 307L1366 316V534L1243 524z" fill="#a0b75e" />
      <path d="M1243 524L1366 534V576L1240 567z" fill="#7e8f48" />
      <path d="M1253 310L1244 525" stroke="#7e8f48" strokeWidth="1" fill="none" />
    </g>
    <g fill="none" stroke="#c4c4c4" strokeWidth="0.8">
      <circle cx="767" cy="421" r="225" />
      <circle cx="767" cy="196" r="14" />
      <circle cx="992" cy="421" r="14" />
      <circle cx="767" cy="646" r="14" />
      <circle cx="542" cy="421" r="14" />
    </g>
    <g>
      <path d="M225 625L227 605" stroke="#22cc22" strokeWidth="1.500" />
      <path d="M224 625L229 595" stroke="#1080f0" strokeWidth="4" />
      <path d="M229 581L232 597 225 597z" fill="#1080f0" />
      <path d="M215 574.500H225L216 583.500H226" stroke="#1080f0" fill="none" />
      <path d="M236 604.500L240 609 244 604.500M240 609V613" stroke="#22cc22" fill="none" />
      <path d="M224 625L262 628" stroke="#ff0000" strokeWidth="3.500" />
      <path d="M262 624L274 628.500 262 632z" fill="#ff0000" />
      <path d="M263 617L272 625M272 617L263 625" stroke="#c01010" fill="none" />
    </g>
  </IconSvg>
);

export default function App() {
  return (
    <Page>
      <Global />
      <TitleBar>
        <AppLogo><Ic n="gld" s={16} /></AppLogo>
        <TitleText>广联达BIM钢筋算量软件 GGJ2013 - [C:\Users\Administrator.PC-20141127NRHM\Desktop\白龙村-2016-08-25-13-27-07(2166版).GGJ12]</TitleText>
        <WinControls>
          <WinButton><svg width="12" height="12"><path d="M1 6.500h10" stroke="#999" /></svg></WinButton>
          <WinButton><svg width="12" height="12"><path d="M.5 2.500h8v8h-8zM3 2.500V.5h8v8H8.500" stroke="#999" fill="none" /></svg></WinButton>
          <WinButton><svg width="12" height="12"><path d="M1 1l10 10M11 1L1 11" stroke="#999" /></svg></WinButton>
        </WinControls>
        <Badge>69</Badge>
      </TitleBar>

      <MenuBar>
        <MenuCells>
          {([["文件(F)", 48], ["编辑(E)", 49], ["楼层(L)", 48], ["构件(N)", 52], ["绘图(D)", 51], ["修改(M)", 54], ["钢筋量(Q)", 64], ["视图(V)", 50], ["工具(T)", 49], ["云应用(Y)", 61], ["BIM应用(I)", 70], ["在线服务(S)", 73], ["帮助(H)", 51], ["版本号(B)", 61]] as [string, number][]).map(([t, w]) => (
            <MenuItem key={t} $w={w}>{t}</MenuItem>
          ))}
          <Tools items={[{ i: "newchg", t: "新建变更", w: 87, g: 3, a: 5 }, { i: "guang", t: "广小二", w: 62, g: 3 }]} />
        </MenuCells>
        <NewsTab>如何处理筏板附加钢筋..</NewsTab>
        <UserTab>
          <IconSlot><Ic n="avatar" /></IconSlot>
          <Phone>13907298339</Phone>
          <Caret $m={5} />
          <Beans>造价豆:0</Beans>
          <BellSlot><Ic n="bell" /></BellSlot>
          <More>»</More>
        </UserTab>
      </MenuBar>

      <ToolRow $h={26} $mb={4}>
        <Bar $p={5} $w={151}><Tools items={quick} /><Chevrons>»</Chevrons></Bar>
        <Bar $ml={2} $p={4} $w={544}><Tools items={main} /><Chevrons>»</Chevrons></Bar>
        <Bar $ml={6} $p={4} $fill><Tools items={view} /><More>»</More></Bar>
      </ToolRow>

      <Body>
        <Nav>
          <NavHead>
            模块导航栏
            <NavPin><Ic n="pin" s={12} /></NavPin>
            <NavClose><Ic n="x" s={11} /></NavClose>
          </NavHead>
          <NavButton $h={22}>工程设置</NavButton>
          <NavButton $mt={1}>绘图输入</NavButton>
          <TreePane>
            <TreeTools>
              <Ic n="plus2" />
              <Ic n="minus2" />
            </TreeTools>
            <TreeWrap>
              <Tree />
              <Scroll>
                <ScrollEnd><Ic n="upS" s={12} /></ScrollEnd>
                <ScrollGap $h={23} />
                <ScrollThumb />
                <Spacer />
                <ScrollEnd><svg width="12" height="12"><path d="M2 4l4 4 4-4" stroke="#555" strokeWidth="1.400" fill="none" /></svg></ScrollEnd>
              </Scroll>
            </TreeWrap>
          </TreePane>
          <NavButton>单构件输入</NavButton>
          <NavButton $mt={1}>报表预览</NavButton>
        </Nav>

        <Work>
          <ToolRow $h={26} $mb={2} $ml={7}>
            <Bar><Tools items={edit} /></Bar>
          </ToolRow>
          <ToolRow $h={24} $mb={4} $ml={7}>
            <Bar>
              <GripBox $w={7} $x={3} />
              <Combo t="基础层" w={57} />
              <Combo t="基础" w={69} />
              <Combo t="独立基础" w={69} />
              <Combo t="DJ-2" w={69} />
              <Combo t="整体" w={69} mr={5} />
              <Tools items={comp} />
            </Bar>
            <Bar $ml={2}><Tools items={axis} /></Bar>
          </ToolRow>
          <ToolRow $h={28} $ml={7}>
            <Bar>
              <Tools items={drawA} />
              <EmptyCombo><Caret $m={0} $off /></EmptyCombo>
              <Tools items={drawB} />
            </Bar>
            <Bar $ml={121} $w={31}>
              <GripBox $w={4} $x={2} />
              <FadePanel />
            </Bar>
          </ToolRow>
          <Canvas><Scene /></Canvas>
          <ToolRow $h={27} $ml={7} $mt={2}>
            <Bar><Tools items={snapA} /></Bar>
            <Bar $ml={2}><Tools items={snapB} /></Bar>
            <Bar $ml={2}>
              <GripBox $w={8} $x={4} />
              <Combo t="不偏移" w={61} mr={2} />
              <SepBox $w={2} />
              <FieldLabel $w={19} $off>X=</FieldLabel>
              <Spin v="0" w={58} />
              <FieldLabel $w={28} $off>mm</FieldLabel>
              <FieldLabel $w={18} $off>Y=</FieldLabel>
              <Spin v="0" w={58} />
              <FieldLabel $w={28} $off>mm</FieldLabel>
              <SepBox $w={3} />
              <Check />
              <FieldLabel $w={28}>旋转</FieldLabel>
              <Spin v="0.000" w={68} />
              <FieldLabel $w={9} $off>°</FieldLabel>
            </Bar>
          </ToolRow>
        </Work>
      </Body>

      <Status>
        <Cell $w={147}><Code>X=71082 Y=2675</Code></Cell>
        <Cell $w={77}>层高<Code>:2.15m</Code></Cell>
        <Cell $w={97}>底标高<Code>:-2.2m</Code></Cell>
        <Cell $w={47}><Code>0</Code></Cell>
        <Cell />
        <CellGap />
        <Cell $w={70}><Code>361.3 FPS</Code></Cell>
      </Status>

      <Taskbar>
        <Start><Ic n="winlogo" /></Start>
        <Search>
          <svg width="24" height="24"><circle cx="12" cy="12" r="9.500" fill="none" stroke="#222" strokeWidth="2.500" /></svg>
          <SearchText>在这里输入你要搜索的内容</SearchText>
          <Ic n="mic" />
        </Search>
        <TaskBtn $w={50}><Ic n="tview" s={18} /></TaskBtn>
        <TaskBtn $w={51}><Ic n="fan" s={24} /></TaskBtn>
        <TaskBtn $w={51}><Ic n="ie" s={24} /></TaskBtn>
        <TaskBtn $w={51}>
          <Ic n="swirl" s={24} />
          <TrayBadge><Ic n="trayBell" s={14} /></TrayBadge>
        </TaskBtn>
        <TaskBtn $w={54} $on><Ic n="gld" s={24} /></TaskBtn>
        <Spacer />
        <ScrollStrip>
          <svg width="10" height="8"><path d="M1 6l4-4 4 4" stroke="#444" strokeWidth="1.400" fill="none" /></svg>
          <svg width="10" height="8"><path d="M1 2l4 4 4-4" stroke="#444" strokeWidth="1.400" fill="none" /></svg>
        </ScrollStrip>
        <Tray $w={44}>链接</Tray>
        <Tray $w={44}><Ic n="person" /></Tray>
        <StackText $w={81}><span>40%</span><span>CPU使用</span></StackText>
        <Tray $w={20}><Ic n="chevUp" s={14} /></Tray>
        <Tray $w={26} />
        <Tray $w={24}><Ic n="trayBell" /></Tray>
        <Tray $w={23}><Ic n="battery" /></Tray>
        <Tray $w={25}><Ic n="wifi" /></Tray>
        <Tray $w={21}><Ic n="sound" /></Tray>
        <Tray $w={36}>
          <svg width="23" height="13"><rect x=".5" y=".5" width="22" height="12" rx="1" fill="none" stroke="#eee" /><path d="M3 4h17M3 6.500h17" stroke="#eee" strokeDasharray="1 1" /><path d="M6 9.500h11" stroke="#eee" /></svg>
        </Tray>
        <Tray $w={18}>中</Tray>
        <Tray $w={40}><SogouS>S</SogouS></Tray>
        <StackText $w={70}><span>16:15</span><span>2018/9/22</span></StackText>
        <Tray $w={42}><Ic n="notif" /></Tray>
        <Tray $w={12} />
      </Taskbar>
    </Page>
  );
}
